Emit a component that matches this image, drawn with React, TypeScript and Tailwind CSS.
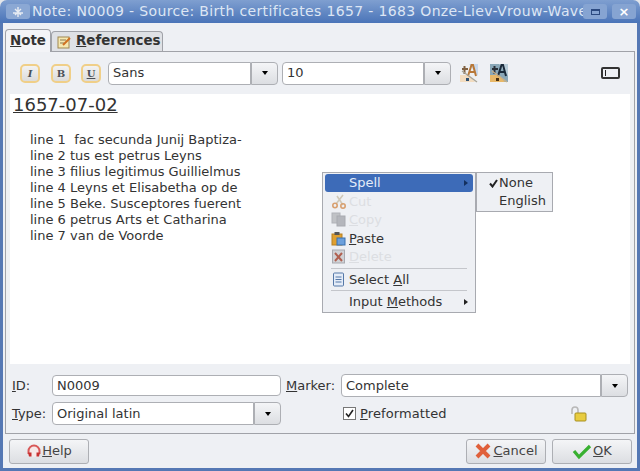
import type { ReactNode } from 'react';

const face = "font-['DejaVu_Sans',sans-serif]";

function ArrowBtn() {
  return (
    <div className="flex w-[27px] items-center justify-center rounded-r-[4px] border border-[#adafb4] bg-gradient-to-b from-[#f4f5f7] to-[#dcdee2]">
      <div className="h-0 w-0 border-x-[3.5px] border-t-[4px] border-x-transparent border-t-black" />
    </div>
  );
}

function Combo({ value, inputW }: { value: string; inputW: string }) {
  return (
    <div className="flex h-[23px]">
      <div className={`${inputW} flex items-center rounded-l-[4px] border border-[#adafb4] bg-white pl-1 text-[13px] text-[#333]`}>{value}</div>
      <ArrowBtn />
    </div>
  );
}

function FormatBtn({ label, className = '' }: { label: string; className?: string }) {
  return (
    <div className={`flex h-[19px] w-[20px] items-center justify-center rounded-[5px] border-2 border-[#f0cf88] bg-gradient-to-b from-[#f2f2f2] to-[#dcdcdc] font-['DejaVu_Serif',serif] text-[10px] font-bold text-[#4a5058] ${className}`}>
      {label}
    </div>
  );
}

function FontIcon({ dark }: { dark?: boolean }) {
  return (
    <svg width="20" height="20" viewBox="0 0 20 20" className="shrink-0">
      <rect x="1" y="1" width="18" height="18" fill={dark ? '#8aa8b8' : '#eef0f2'} />
      <path d="M1 12h9l6 7H1z" fill={dark ? '#e8b868' : '#f2dcc0'} />
      <path d="M10 1h9v12z" fill={dark ? '#b8ccd8' : '#c8d8ec'} />
      <path d="M3 6h6M5.5 3v8" stroke={dark ? '#2a3038' : '#806040'} strokeWidth="2" fill="none" />
      <path d="M9 13L12.5 2h1.5l3 11M11 9h5" stroke={dark ? '#1a2a3a' : '#b87838'} strokeWidth="2" fill="none" />
      <path d="M3 8l15 11" stroke={dark ? '#c8b088' : '#a8a498'} strokeWidth="1.3" />
      <rect x="7" y="15" width="3" height="3" fill={dark ? '#4a3010' : '#305070'} />
    </svg>
  );
}

function MenuItem({ icon, children, arrow, active, disabled }: { icon?: ReactNode; children: ReactNode; arrow?: boolean; active?: boolean; disabled?: boolean }) {
  return (
    <div className={`flex h-[18.5px] items-center rounded-[3px] text-[13px] ${active ? 'bg-[#3d6bb8] text-[#e4ecf8]' : disabled ? 'text-[#dcdee2]' : 'text-[#333]'}`}>
      <div className="flex w-[24px] shrink-0 justify-center pl-[3px]">{icon}</div>
      <span className="flex-1">{children}</span>
      {arrow && <div className={`mr-[5px] h-0 w-0 border-y-[3px] border-l-[4px] border-y-transparent ${active ? 'border-l-[#14305f]' : 'border-l-[#222]'}`} />}
    </div>
  );
}

function Sep() {
  return <div className="mx-[6px] my-[1.5px] h-px bg-[#c4c6cb]" />;
}

const noteLines = [
  'line 1  fac secunda Junij Baptiza-',
  'line 2 tus est petrus Leyns',
  'line 3 filius legitimus Guillielmus',
  'line 4 Leyns et Elisabetha op de',
  'line 5 Beke. Susceptores fuerent',
  'line 6 petrus Arts et Catharina',
  'line 7 van de Voorde',
];

export default function App() {
  return (
    <div className={`relative flex h-[471px] w-[640px] flex-col overflow-hidden bg-[#e4e6ea] ${face}`}>
      {/* Title bar */}
      <div className="flex h-[23px] shrink-0 items-center rounded-t-[7px] bg-gradient-to-b from-[#7f9fd0] to-[#4a74b8] pl-[6px] pr-[4px]">
        <div className="flex h-[15px] w-[24px] shrink-0 items-center justify-center rounded-[3px] bg-[#8ba8d4]">
          <svg width="14" height="12" viewBox="0 0 14 12">
            <path d="M2 7h10M7 1v10M4 3l6 6M10 3L4 9" stroke="#e8ecf2" strokeWidth="1.4" />
          </svg>
        </div>
        <div className="ml-[2px] min-w-0 flex-1 whitespace-nowrap text-[14px] tracking-[0.35px] text-[#dde6f4]">
          Note: N0009 - Source: Birth certificates 1657 - 1683 Onze-Liev-Vrouw-Wave
        </div>
        <div className="ml-[1px] flex h-[15px] w-[24px] shrink-0 items-center justify-center rounded-[3px] bg-[#86a4d2]">
          <div className="h-[6px] w-[9px] border border-t-2 border-[#2c4a80]" />
        </div>
        <div className="ml-[5px] flex h-[15px] w-[24px] shrink-0 items-center justify-center rounded-[3px] bg-[#86a4d2] text-[13px] font-bold leading-none text-white">
          ×
        </div>
      </div>

      <div className="flex min-h-0 flex-1 flex-col bg-[#5578b4] px-[3px] pb-[3px]">
        <div className="flex min-h-0 flex-1 flex-col bg-[#eef0f4]">
          {/* Tabs */}
          <div className="flex h-[28px] shrink-0 items-end pl-[2px] text-[13.4px] text-[#333]">
            <div className="z-10 -mb-px flex h-[23px] w-[46px] items-center justify-center rounded-t-[4px] border border-b-0 border-[#a0a2a8] bg-[#f3f4f7] font-bold">
              <span><u>N</u>ote</span>
            </div>
            <div className="flex h-[20px] w-[112px] items-center gap-[5px] rounded-t-[4px] border border-b-0 border-[#a0a2a8] bg-[#dfe1e5] pl-[5px] font-bold">
              <svg width="14" height="14" viewBox="0 0 14 14" className="shrink-0">
                <rect x="1" y="2" width="11" height="11" fill="#f6e8b0" stroke="#a08850" />
                <path d="M3 5h6M3 8h4" stroke="#8a7a50" />
                <path d="M6 10l7-7" stroke="#d07020" strokeWidth="2" />
              </svg>
              <span><u>R</u>eferences</span>
            </div>
          </div>

          {/* Tab panel */}
          <div className="mx-[2px] flex h-[383px] shrink-0 flex-col border border-[#a0a2a8] bg-[#eef0f4]">
            {/* Toolbar */}
            <div className="flex h-[42px] shrink-0 items-center pl-[14px] pr-[14px]">
              <FormatBtn label="I" className="italic" />
              <FormatBtn label="B" className="ml-[11px]" />
              <FormatBtn label="U" className="ml-[10px] underline" />
              <div className="ml-[7px]"><Combo value="Sans" inputW="w-[143px]" /></div>
              <div className="ml-[4px]"><Combo value="10" inputW="w-[142px]" /></div>
              <div className="ml-[8px]"><FontIcon /></div>
              <div className="ml-[10px]"><FontIcon dark /></div>
              <div className="ml-auto flex h-[12px] w-[19px] items-center rounded-[2px] border-2 border-[#333] pl-[2px]">
                <div className="h-[6px] w-px bg-[#222]" />
              </div>
            </div>

            {/* Note editor */}
            <div className="mx-[4px] h-[270px] shrink-0 bg-white pl-[3px] text-[#333]">
              <div className="text-[18px] leading-[22px] underline">1657-07-02</div>
              <div className="mt-[16px] whitespace-pre pl-[17px] text-[13px] leading-[16px]">
                {noteLines.map((line) => (
                  <div key={line}>{line}</div>
                ))}
              </div>
            </div>

            {/* Fields */}
            <div className="grid grid-cols-[40px_auto_1fr] px-[6px] pt-[11px] text-[13px] text-[#333]">
              <div className="flex h-[21px] items-center"><span><u>I</u>D:</span></div>
              <div className="flex h-[21px] w-[229px] items-center rounded-[4px] border border-[#adafb4] bg-white pl-1">N0009</div>
              <div className="ml-[5px] flex h-[21px] items-center">
                <span className="w-[55px]"><u>M</u>arker:</span>
                <Combo value="Complete" inputW="w-[260px]" />
              </div>
              <div className="mt-[6px] flex h-[23px] items-center"><span><u>T</u>ype:</span></div>
              <div className="mt-[6px]"><Combo value="Original latin" inputW="w-[202px]" /></div>
              <div className="mt-[6px] flex h-[23px] items-center pl-[62px]">
                <div className="flex h-[13px] w-[13px] items-center justify-center border border-[#777] bg-white">
                  <svg width="9" height="9" viewBox="0 0 9 9">
                    <path d="M1 4.5l2.5 3L8 1" stroke="#222" strokeWidth="1.6" fill="none" />
                  </svg>
                </div>
                <span className="ml-[4px] tracking-[0.1px]"><u>P</u>reformatted</span>
                <svg width="17" height="16" viewBox="0 0 17 16" className="ml-[123px]">
                  <path d="M2 8V4a3 3 0 0 1 6 0v3" stroke="#b8b8b8" strokeWidth="1.6" fill="none" />
                  <rect x="5" y="7" width="11" height="8" rx="1" fill="#e8cc40" stroke="#a89020" />
                </svg>
              </div>
            </div>
          </div>

          {/* Dialog buttons */}
          <div className="flex flex-1 items-center pl-[6px] pr-[5px] text-[13px] text-[#444]">
            <div className="flex h-[25px] w-[80px] items-center justify-center rounded-[3px] border border-[#adafb4] bg-gradient-to-b from-[#f4f5f7] to-[#dcdee2]">
              <svg width="16" height="16" viewBox="0 0 16 16" className="shrink-0">
                <circle cx="8" cy="8" r="6" fill="#f6e8e8" />
                <path d="M2.5 11V8a5.5 5.5 0 0 1 11 0v3" stroke="#d85858" strokeWidth="2" fill="none" />
                <path d="M2 9.5h3.5v4H3zM10.5 9.5H14l-1 4h-2.5z" fill="#c83030" />
              </svg>
              <span><u>H</u>elp</span>
            </div>
            <div className="ml-auto flex h-[25px] w-[80px] items-center justify-center gap-[1px] rounded-[3px] border border-[#adafb4] bg-gradient-to-b from-[#f4f5f7] to-[#dcdee2]">
              <svg width="18" height="18" viewBox="0 0 18 18" className="shrink-0">
                <path d="M3 3l12 12M15 3L3 15" stroke="#e0603a" strokeWidth="4" />
              </svg>
              <span><u>C</u>ancel</span>
            </div>
            <div className="ml-[6px] flex h-[25px] w-[80px] items-center justify-center gap-[1px] rounded-[3px] border border-[#adafb4] bg-gradient-to-b from-[#f4f5f7] to-[#dcdee2]">
              <svg width="20" height="18" viewBox="0 0 20 18" className="shrink-0">
                <path d="M2 9l5 6L18 4" stroke="#38b030" strokeWidth="3.2" fill="none" />
              </svg>
              <span><u>O</u>K</span>
            </div>
          </div>
        </div>
      </div>

      {/* Context menu */}
      <div className="absolute left-[322px] top-[172px] h-[141px] w-[154px] border border-[#a8aab0] bg-[#eef0f4] px-[2px] pt-[0.5px]">
        <MenuItem active arrow>Spell</MenuItem>
        <MenuItem disabled icon={
          <svg width="15" height="15" viewBox="0 0 15 15">
            <path d="M12 1L5 10M6 2l6 9" stroke="#cfc8b8" strokeWidth="1.6" />
            <circle cx="4" cy="11.5" r="2.2" fill="none" stroke="#d8a070" strokeWidth="1.6" />
            <circle cx="12" cy="12" r="2.2" fill="none" stroke="#d8a070" strokeWidth="1.6" />
          </svg>
        }>Cut</MenuItem>
        <MenuItem disabled icon={
          <svg width="15" height="15" viewBox="0 0 15 15">
            <rect x="1" y="1" width="8" height="10" fill="#c0c2c6" stroke="#b0b2b8" />
            <rect x="6" y="4" width="8" height="10" fill="#b4b6bc" stroke="#a8aab0" />
          </svg>
        }><u>C</u>opy</MenuItem>
        <MenuItem icon={
          <svg width="15" height="15" viewBox="0 0 15 15">
            <rect x="1" y="3" width="10" height="11" fill="#e0a030" stroke="#b88020" />
            <rect x="3.5" y="1" width="5" height="3" fill="#555" />
            <rect x="6" y="7" width="8" height="7" fill="#6ca0dc" stroke="#3870b0" />
          </svg>
        }><u>P</u>aste</MenuItem>
        <MenuItem disabled icon={
          <svg width="15" height="15" viewBox="0 0 15 15">
            <rect x="1.5" y="1" width="12" height="13" fill="#d0d2d6" stroke="#a8aab0" />
            <path d="M4 4l7 8M11 4l-7 8" stroke="#b06050" strokeWidth="2" />
          </svg>
        }><u>D</u>elete</MenuItem>
        <Sep />
        <MenuItem icon={
          <svg width="13" height="15" viewBox="0 0 13 15">
            <rect x="1.5" y="1" width="10" height="13" rx="1" fill="#e4ecf8" stroke="#5578a8" />
            <path d="M3.5 5h6M3.5 7.5h6M3.5 10h6" stroke="#5578a8" />
          </svg>
        }>Select <u>A</u>ll</MenuItem>
        <Sep />
        <MenuItem arrow>Input <u>M</u>ethods</MenuItem>
      </div>

      {/* Spell submenu */}
      <div className="absolute left-[476px] top-[172px] h-[40px] w-[77px] border border-[#a8aab0] bg-[#eef0f4] py-px text-[13px] leading-[18px] text-[#333]">
        <div className="flex items-center">
          <svg width="9" height="9" viewBox="0 0 9 9" className="ml-[12px] mr-[1px]">
            <path d="M1 4.5l2.5 3L8 1" stroke="#222" strokeWidth="2" fill="none" />
          </svg>
          <span>None</span>
        </div>
        <div className="pl-[22px]">English</div>
      </div>
    </div>
  );
}
